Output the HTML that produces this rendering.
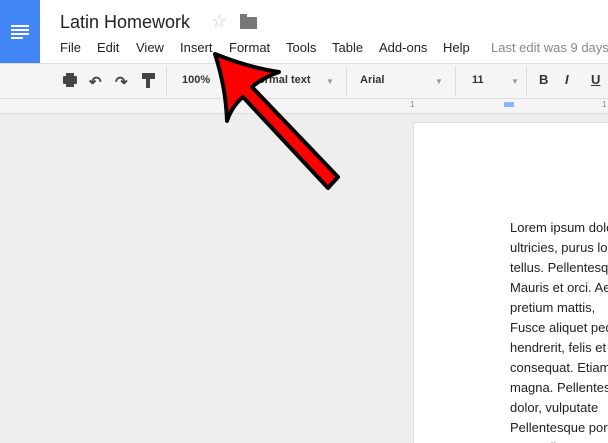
<!DOCTYPE html><html><head><style>
html,body{margin:0;width:608px;height:443px;overflow:hidden}
body{background:#eeeeee;font-family:"Liberation Sans",Arial,sans-serif;position:relative}
.a{position:absolute}
.menu span{position:absolute;top:40px;font-size:13px;color:#222;white-space:nowrap}
.tb{font-size:11px;color:#333;position:absolute;top:74px;white-space:nowrap}
.sep{position:absolute;top:66px;width:1px;height:30px;background:#ddd}
.lt{position:absolute;left:510px;font-size:13px;color:#222;white-space:nowrap}
</style></head><body>
<div class="a" style="left:0;top:0;width:608px;height:63px;background:#fff;border-bottom:1px solid #ddd"></div>
<div class="a" style="left:0;top:0;width:40px;height:63px;background:#4285f4"></div>
<div class="a" style="left:11px;top:25px;width:18px;height:2px;background:#fff;box-shadow:0 4px 0 #fff,0 8px 0 #fff"></div>
<div class="a" style="left:11px;top:37px;width:12px;height:2px;background:#fff"></div>
<div class="a" style="left:60px;top:12px;font-size:18px;color:#222">Latin Homework</div>
<div class="a" style="left:211px;top:11px;font-size:18px;color:#ccc">☆</div>
<div class="a" style="left:240px;top:17px;width:17px;height:12px;background:#777"></div>
<div class="a" style="left:240px;top:14px;width:7px;height:4px;background:#777"></div>
<div class="menu"><span style="left:60px">File</span><span style="left:97px">Edit</span><span style="left:136px">View</span><span style="left:180px">Insert</span><span style="left:229px">Format</span><span style="left:286px">Tools</span><span style="left:332px">Table</span><span style="left:379px">Add-ons</span><span style="left:443px">Help</span><span style="left:491px;color:#888">Last edit was 9 days</span></div>
<div class="a" style="left:0;top:64px;width:608px;height:34px;background:#f5f5f5;border-bottom:1px solid #ddd"></div>
<div class="a" style="left:63px;top:76px;width:14px;height:8px;background:#444;border-radius:1px"></div>
<div class="a" style="left:66px;top:73px;width:8px;height:14px;background:linear-gradient(#444 0 3px,transparent 3px 8px,#444 8px)"></div>
<div class="a" style="left:89px;top:73px;font-size:15px;color:#444;font-weight:bold">↶</div>
<div class="a" style="left:115px;top:73px;font-size:15px;color:#444;font-weight:bold">↷</div>
<div class="a" style="left:142px;top:73px;width:13px;height:6px;background:#444"></div>
<div class="a" style="left:146px;top:79px;width:4px;height:9px;background:#444"></div>
<div class="sep" style="left:166px"></div>
<div class="tb" style="left:182px;font-weight:bold">100%</div>
<div class="tb" style="left:250px;font-weight:bold">Normal text</div><div class="tb" style="left:326px;color:#999;font-size:8px;top:77px">▼</div>
<div class="sep" style="left:346px"></div>
<div class="tb" style="left:360px;font-weight:bold">Arial</div><div class="tb" style="left:435px;color:#999;font-size:8px;top:77px">▼</div>
<div class="sep" style="left:455px"></div>
<div class="tb" style="left:472px;font-weight:bold">11</div><div class="tb" style="left:511px;color:#999;font-size:8px;top:77px">▼</div>
<div class="sep" style="left:526px"></div>
<div class="tb" style="left:539px;font-weight:bold;font-size:13px;top:72px">B</div>
<div class="tb" style="left:565px;font-weight:bold;font-style:italic;font-size:13px;top:72px">I</div>
<div class="tb" style="left:591px;font-weight:bold;text-decoration:underline;font-size:13px;top:72px">U</div>
<div class="a" style="left:0;top:99px;width:608px;height:14px;background:#f5f5f5;border-bottom:1px solid #ddd"></div>
<div class="a" style="left:410px;top:100px;font-size:8px;color:#888">1</div>
<div class="a" style="left:602px;top:100px;font-size:8px;color:#888">1</div>
<div class="a" style="left:504px;top:102px;width:10px;height:5px;background:#8ab4f8"></div>
<div class="a" style="left:413px;top:122px;width:195px;height:321px;background:#fff;border-left:1px solid #ddd;border-top:1px solid #ddd"></div>
<div class="lt" style="top:220px">Lorem ipsum dolor</div>
<div class="lt" style="top:240px">ultricies, purus lorem</div>
<div class="lt" style="top:260px">tellus. Pellentesque</div>
<div class="lt" style="top:280px">Mauris et orci. Aenean</div>
<div class="lt" style="top:300px">pretium mattis,</div>
<div class="lt" style="top:320px">Fusce aliquet pede</div>
<div class="lt" style="top:340px">hendrerit, felis et</div>
<div class="lt" style="top:360px">consequat. Etiam</div>
<div class="lt" style="top:380px">magna. Pellentesque</div>
<div class="lt" style="top:400px">dolor, vulputate</div>
<div class="lt" style="top:420px">Pellentesque porta</div>
<div class="lt" style="top:440px">amet, dictum</div>
<svg class="a" style="left:0;top:0" width="608" height="443"><path d="M215 54 Q250 68 279 72 Q262 78 252 87 L338 177 L328 188 L243 97 Q232 106 227 121 Q226 88 215 54Z" fill="#f00" stroke="#000" stroke-width="4" stroke-linejoin="round"/></svg>
</body></html>
